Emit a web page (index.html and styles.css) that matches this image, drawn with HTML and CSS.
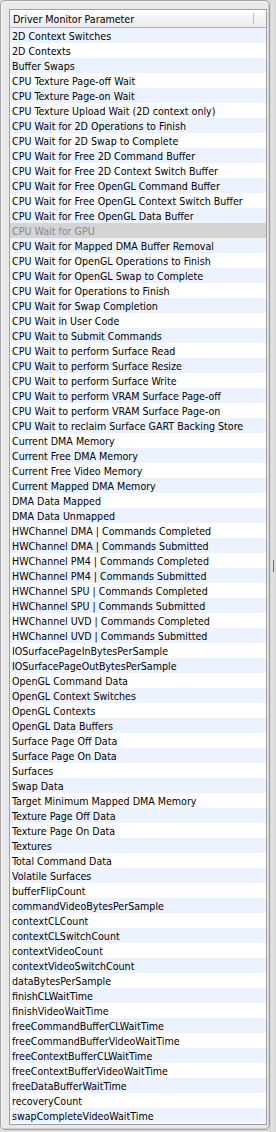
FILE: index.html
```html
<!DOCTYPE html>
<html>
<head>
<meta charset="utf-8">
<link rel="stylesheet" href="styles.css">
</head>
<body>
<div class="window">
  <div class="box">
    <div class="table">
      <div class="header"><span class="htext">Driver Monitor Parameter</span><span class="hsep"></span></div>
      <div class="rows">
        <div class="row">2D Context Switches</div>
        <div class="row">2D Contexts</div>
        <div class="row">Buffer Swaps</div>
        <div class="row">CPU Texture Page-off Wait</div>
        <div class="row">CPU Texture Page-on Wait</div>
        <div class="row">CPU Texture Upload Wait (2D context only)</div>
        <div class="row">CPU Wait for 2D Operations to Finish</div>
        <div class="row">CPU Wait for 2D Swap to Complete</div>
        <div class="row">CPU Wait for Free 2D Command Buffer</div>
        <div class="row">CPU Wait for Free 2D Context Switch Buffer</div>
        <div class="row">CPU Wait for Free OpenGL Command Buffer</div>
        <div class="row">CPU Wait for Free OpenGL Context Switch Buffer</div>
        <div class="row">CPU Wait for Free OpenGL Data Buffer</div>
        <div class="row selected">CPU Wait for GPU</div>
        <div class="row">CPU Wait for Mapped DMA Buffer Removal</div>
        <div class="row">CPU Wait for OpenGL Operations to Finish</div>
        <div class="row">CPU Wait for OpenGL Swap to Complete</div>
        <div class="row">CPU Wait for Operations to Finish</div>
        <div class="row">CPU Wait for Swap Completion</div>
        <div class="row">CPU Wait in User Code</div>
        <div class="row">CPU Wait to Submit Commands</div>
        <div class="row">CPU Wait to perform Surface Read</div>
        <div class="row">CPU Wait to perform Surface Resize</div>
        <div class="row">CPU Wait to perform Surface Write</div>
        <div class="row">CPU Wait to perform VRAM Surface Page-off</div>
        <div class="row">CPU Wait to perform VRAM Surface Page-on</div>
        <div class="row">CPU Wait to reclaim Surface GART Backing Store</div>
        <div class="row">Current DMA Memory</div>
        <div class="row">Current Free DMA Memory</div>
        <div class="row">Current Free Video Memory</div>
        <div class="row">Current Mapped DMA Memory</div>
        <div class="row">DMA Data Mapped</div>
        <div class="row">DMA Data Unmapped</div>
        <div class="row">HWChannel DMA | Commands Completed</div>
        <div class="row">HWChannel DMA | Commands Submitted</div>
        <div class="row">HWChannel PM4 | Commands Completed</div>
        <div class="row">HWChannel PM4 | Commands Submitted</div>
        <div class="row">HWChannel SPU | Commands Completed</div>
        <div class="row">HWChannel SPU | Commands Submitted</div>
        <div class="row">HWChannel UVD | Commands Completed</div>
        <div class="row">HWChannel UVD | Commands Submitted</div>
        <div class="row">IOSurfacePageInBytesPerSample</div>
        <div class="row">IOSurfacePageOutBytesPerSample</div>
        <div class="row">OpenGL Command Data</div>
        <div class="row">OpenGL Context Switches</div>
        <div class="row">OpenGL Contexts</div>
        <div class="row">OpenGL Data Buffers</div>
        <div class="row">Surface Page Off Data</div>
        <div class="row">Surface Page On Data</div>
        <div class="row">Surfaces</div>
        <div class="row">Swap Data</div>
        <div class="row">Target Minimum Mapped DMA Memory</div>
        <div class="row">Texture Page Off Data</div>
        <div class="row">Texture Page On Data</div>
        <div class="row">Textures</div>
        <div class="row">Total Command Data</div>
        <div class="row">Volatile Surfaces</div>
        <div class="row">bufferFlipCount</div>
        <div class="row">commandVideoBytesPerSample</div>
        <div class="row">contextCLCount</div>
        <div class="row">contextCLSwitchCount</div>
        <div class="row">contextVideoCount</div>
        <div class="row">contextVideoSwitchCount</div>
        <div class="row">dataBytesPerSample</div>
        <div class="row">finishCLWaitTime</div>
        <div class="row">finishVideoWaitTime</div>
        <div class="row">freeCommandBufferCLWaitTime</div>
        <div class="row">freeCommandBufferVideoWaitTime</div>
        <div class="row">freeContextBufferCLWaitTime</div>
        <div class="row">freeContextBufferVideoWaitTime</div>
        <div class="row">freeDataBufferWaitTime</div>
        <div class="row">recoveryCount</div>
        <div class="row">swapCompleteVideoWaitTime</div>
      </div>
    </div>
  </div>
  <div class="divider"><span class="grip"></span></div>
</div>
</body>
</html>
```

FILE: styles.css
```css
html, body {
  margin: 0;
  padding: 0;
  background: #dedede;
}
body {
  width: 276px;
  height: 1132px;
  overflow: hidden;
  font-family: "DejaVu Sans Condensed", "Liberation Sans", sans-serif;
  font-stretch: condensed;
  font-size: 10.6px;
  color: #000;
}
.window {
  display: flex;
  width: 276px;
  height: 1132px;
}
.box {
  box-sizing: border-box;
  width: 270px;
  height: 1130px;
  border: 1px solid #a3a3a3;
  border-radius: 5px;
  background: #e9e9e9;
  box-shadow: inset 1px 1px 0 #f6f6f6, inset -1px -1px 0 #cfcfcf;
  padding: 8px 1px 0 8px;
}
.table {
  border: 1px solid #a0a0a0;
  background: #fff;
  width: 258px;
  box-sizing: border-box;
  height: 1116px;
  overflow: hidden;
}
.header {
  display: flex;
  align-items: center;
  height: 17px;
  border-bottom: 1px solid #b4b4b4;
  background: linear-gradient(#ffffff, #f3f3f3 50%, #ececec);
}
.htext {
  padding-left: 3px;
  padding-top: 1px;
  line-height: 16px;
  flex: 1;
}
.hsep {
  width: 1px;
  height: 11px;
  background: #bdbdbd;
  margin-right: 12px;
}
.row {
  height: 14px;
  padding-top: 1px;
  line-height: 15px;
  padding-left: 2px;
  white-space: nowrap;
  overflow: hidden;
}
.row:nth-child(odd) {
  background: #edf3fe;
}
.row.selected {
  background: #d4d4d4;
  color: #8a8a8a;
}
.divider {
  flex: 1;
  display: flex;
  align-items: center;
  justify-content: center;
  background: linear-gradient(90deg, #e4e4e4, #d9d9d9);
  border-left: 1px solid #cfcfcf;
}
.grip {
  width: 1px;
  height: 12px;
  background: #6e6e6e;
}
```
